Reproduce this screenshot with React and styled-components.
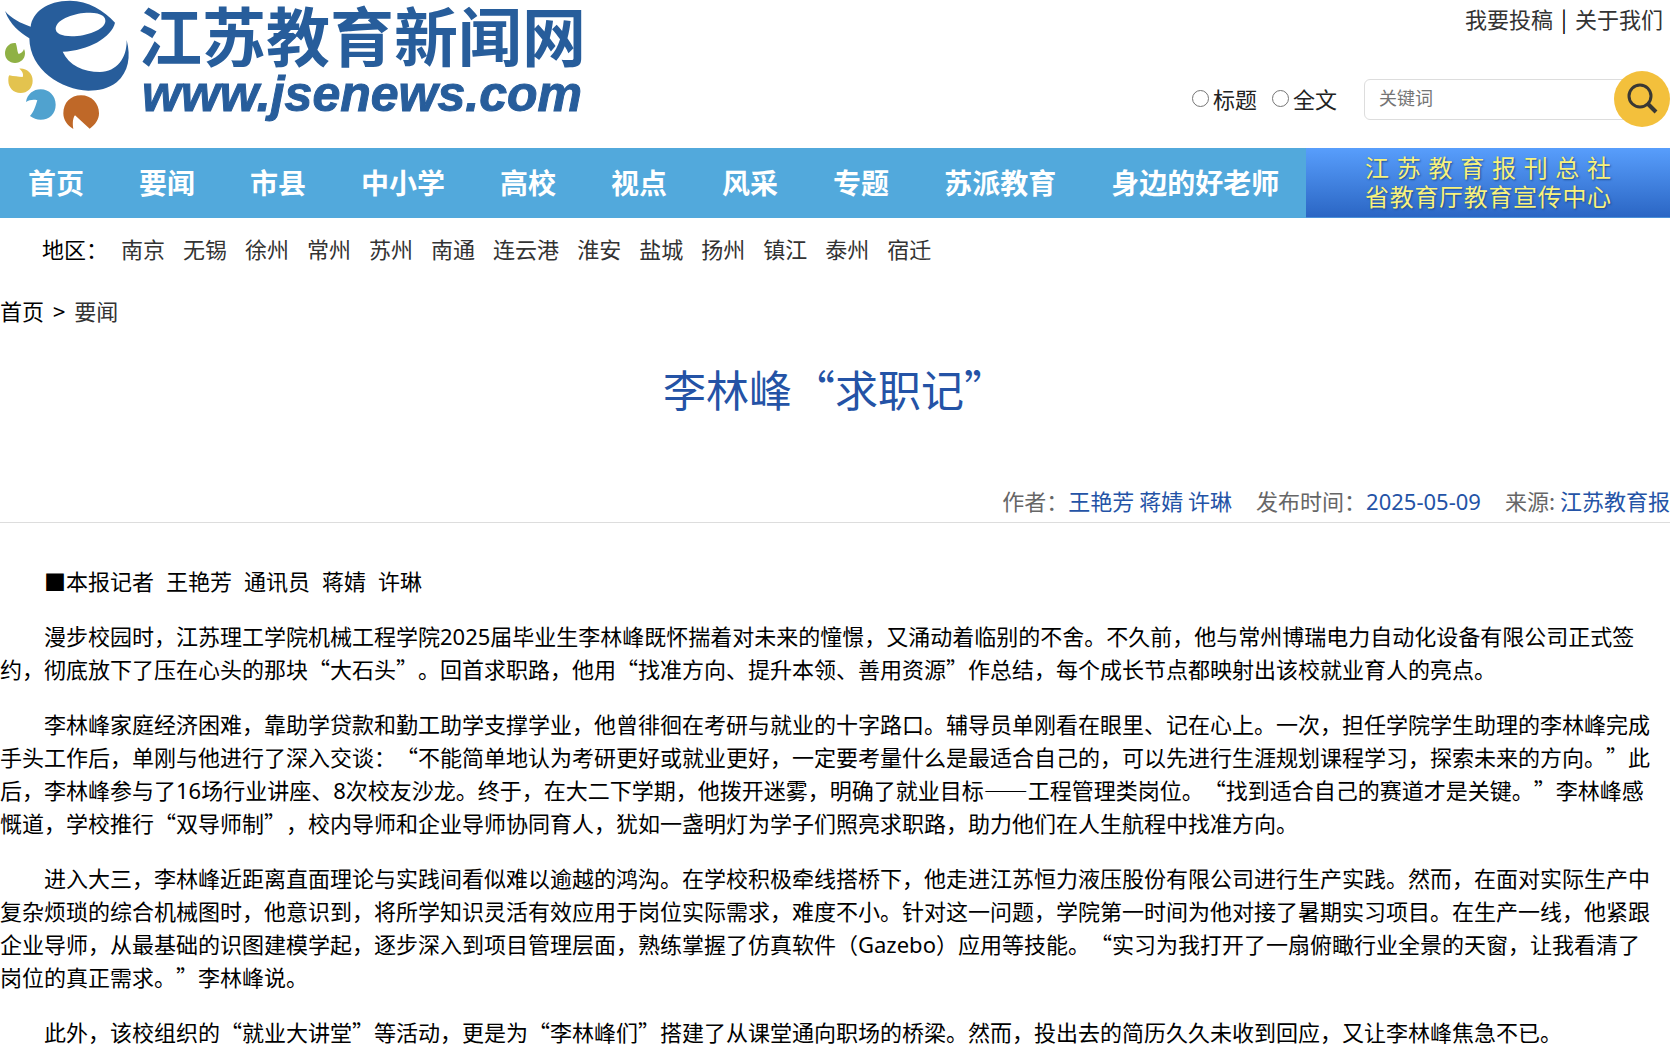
import React, { useState } from "react";
import styled, { createGlobalStyle } from "styled-components";

const GlobalStyle = createGlobalStyle`
  * {
    box-sizing: border-box;
  }
  body {
    margin: 0;
    background: #fff;
    color: #000;
    font-family: "Noto Sans CJK SC", "Noto Sans", sans-serif;
    font-size: 22px;
    line-height: 33px;
    text-spacing-trim: space-all;
  }
  a {
    color: #333;
    text-decoration: none;
  }
`;

const Page = styled.div`
  margin-right: 8px;
`;

const Header = styled.header`
  display: flex;
  justify-content: space-between;
  height: 148px;
`;

const Brand = styled.a`
  display: flex;
  gap: 6px;
  color: #275d9b;
`;

const BrandText = styled.div`
  display: flex;
  flex-direction: column;
  gap: 6px;
`;

const BrandName = styled.span`
  font-size: 64px;
  font-weight: 700;
  line-height: 66px;
`;

const BrandUrl = styled.span`
  padding-left: 4px;
  font-family: "Liberation Sans", Arial, sans-serif;
  font-size: 50px;
  font-weight: 700;
  font-style: italic;
  line-height: 44px;
  -webkit-text-stroke: 1px #275d9b;
`;

const Tools = styled.div`
  display: flex;
  flex-direction: column;
  align-items: flex-end;
  gap: 36px;
  padding-top: 2px;
`;

const TopLinks = styled.div`
  display: flex;
  gap: 8px;
  padding-right: 7px;
`;

const Search = styled.form`
  display: flex;
  align-items: center;
`;

const RadioLabel = styled.label`
  display: flex;
  align-items: center;
  gap: 4px;
  margin-right: 15px;
  padding-bottom: 2px;
  color: #222;
`;

const Radio = styled.input`
  width: 17px;
  height: 17px;
  margin: 0;
`;

const Keyword = styled.input`
  width: 276px;
  height: 41px;
  margin-left: 12px;
  padding: 0 40px 4px 14px;
  border: 1px solid #ddd;
  border-radius: 6px;
  outline: none;
  font-family: inherit;
  font-size: 18px;
  &::placeholder {
    color: #757575;
  }
`;

const SearchButton = styled.button`
  width: 56px;
  height: 56px;
  margin-left: -26px;
  padding: 0;
  border: none;
  border-radius: 50%;
  background: #f3c03c;
  z-index: 1;
  cursor: pointer;
`;

const Nav = styled.nav`
  display: flex;
  height: 70px;
  background: #52a9dc;
`;

const NavLink = styled.a`
  padding: 0 27px 0 28px;
  color: #fff;
  font-size: 28px;
  font-weight: 700;
  line-height: 68px;
  white-space: nowrap;
`;

const Banner = styled.a`
  display: flex;
  flex: 1;
  flex-direction: column;
  align-items: center;
  justify-content: center;
  padding-bottom: 4px;
  background: linear-gradient(#589efc, #2b66c4);
  border-bottom: 1px solid #4a90d9;
`;

const BannerLine = styled.span`
  width: 246px;
  color: #f8f27c;
  font-size: 24px;
  line-height: 29px;
  text-align-last: justify;
  text-shadow: 1px 1px 2px #1c4a8f;
  white-space: nowrap;
`;

const Regions = styled.div`
  display: flex;
  gap: 18px;
  padding: 14px 0 0 42px;
`;

const RegionTitle = styled.span`
  margin-right: -5px;
`;

const Crumbs = styled.div`
  display: flex;
  gap: 9px;
  padding-top: 29px;
`;

const CrumbHome = styled.a`
  color: #000;
`;

const Title = styled.h1`
  margin: 31px 0 0;
  color: #2453a6;
  font-size: 43px;
  font-weight: 400;
  line-height: 60px;
  text-align: center;
`;

const Meta = styled.div`
  display: flex;
  justify-content: flex-end;
  gap: 24px;
  margin-top: 66px;
  padding-bottom: 5px;
  border-bottom: 1px solid #ddd;
  color: #666;
`;

const MetaValue = styled.span`
  color: #2453a6;
`;

const Latin = styled.span`
  font-family: "Noto Sans", sans-serif;
  line-height: 1;
`;

const Article = styled.article`
  padding: 41px 18px 0 0;
`;

const Byline = styled.p`
  display: flex;
  gap: 12px;
  margin: 0;
  padding-left: 44px;
`;

const Paragraph = styled.p`
  margin: 22px 0 0;
  text-indent: 44px;
`;

const navItems = [
  "首页",
  "要闻",
  "市县",
  "中小学",
  "高校",
  "视点",
  "风采",
  "专题",
  "苏派教育",
  "身边的好老师",
];

const regions = [
  "南京",
  "无锡",
  "徐州",
  "常州",
  "苏州",
  "南通",
  "连云港",
  "淮安",
  "盐城",
  "扬州",
  "镇江",
  "泰州",
  "宿迁",
];

const Logo = () => (
  <svg width="132" height="132" viewBox="0 0 396 396" aria-hidden="true">
    <path
      fill="#275d9b"
      fillRule="evenodd"
      d="M15 33C33 55 62 70 92 80C97 38 140 2 210 2C265 2 312 32 345 68C335 112 265 152 188 155C207 196 250 216 300 216C350 215 381 175 380 120C393 170 386 215 350 247C325 267 295 272 265 272C185 270 89 210 88 115C60 97 30 75 15 33ZM167 85C170 55 230 37 270 38C305 39 318 50 316 65C312 90 260 108 215 109C185 109 166 101 167 85Z"
    />
    <path
      fill="#8fb145"
      d="M47 129C27 127 15 143 15 160C15 177 28 189 45 189C62 189 75 177 75 160C75 155 74 151 72 147C70 155 63 160 56 162C51 155 52 140 47 129Z"
    />
    <path
      fill="#e3c34f"
      d="M58 206C80 204 98 220 98 242C98 264 82 279 62 279C40 279 25 262 25 242C25 235 25 230 28 226C42 229 55 230 68 231C72 222 66 212 58 206Z"
    />
    <path
      fill="#50a2cf"
      d="M78 306C82 282 100 268 122 268C148 268 167 288 167 314C167 342 148 359 122 359C110 359 100 355 90 348C102 335 106 320 112 301C100 298 88 300 78 306Z"
    />
    <path
      fill="#bf6828"
      d="M220 387C202 377 190 360 190 340C190 308 212 286 243 286C275 286 297 310 297 340C297 358 287 373 269 386L225 346C217 356 218 374 220 387Z"
    />
  </svg>
);

const SearchIcon = () => (
  <svg width="56" height="56" viewBox="0 0 56 56" fill="none" stroke="#393834">
    <circle cx="26" cy="25" r="11" strokeWidth="3" />
    <path d="M33 32L42 41" strokeWidth="4" />
  </svg>
);

export default function App() {
  const [scope, setScope] = useState("");
  const [keyword, setKeyword] = useState("");

  return (
    <>
      <GlobalStyle />
      <Page lang="zh-CN">
        <Header>
          <Brand href="#">
            <Logo />
            <BrandText>
              <BrandName>江苏教育新闻网</BrandName>
              <BrandUrl>www.jsenews.com</BrandUrl>
            </BrandText>
          </Brand>
          <Tools>
            <TopLinks>
              <a href="#">我要投稿</a>
              <span>|</span>
              <a href="#">关于我们</a>
            </TopLinks>
            <Search onSubmit={(e) => e.preventDefault()}>
              <RadioLabel>
                <Radio
                  type="radio"
                  name="scope"
                  checked={scope === "title"}
                  onChange={() => setScope("title")}
                />
                标题
              </RadioLabel>
              <RadioLabel>
                <Radio
                  type="radio"
                  name="scope"
                  checked={scope === "full"}
                  onChange={() => setScope("full")}
                />
                全文
              </RadioLabel>
              <Keyword
                type="text"
                placeholder="关键词"
                aria-label="关键词"
                value={keyword}
                onChange={(e) => setKeyword(e.target.value)}
              />
              <SearchButton type="submit" aria-label="搜索">
                <SearchIcon />
              </SearchButton>
            </Search>
          </Tools>
        </Header>

        <Nav>
          {navItems.map((item) => (
            <NavLink href="#" key={item}>
              {item}
            </NavLink>
          ))}
          <Banner href="#">
            <BannerLine>江苏教育报刊总社</BannerLine>
            <BannerLine>省教育厅教育宣传中心</BannerLine>
          </Banner>
        </Nav>

        <Regions>
          <RegionTitle>地区：</RegionTitle>
          {regions.map((region) => (
            <a href="#" key={region}>
              {region}
            </a>
          ))}
        </Regions>

        <Crumbs>
          <CrumbHome href="#">首页</CrumbHome>
          <span>&gt;</span>
          <a href="#">要闻</a>
        </Crumbs>

        <Title>李林峰“求职记”</Title>

        <Meta>
          <span>
            作者：<MetaValue>王艳芳 蒋婧 许琳</MetaValue>
          </span>
          <span>
            发布时间：
            <MetaValue>
              <Latin>2025-05-09</Latin>
            </MetaValue>
          </span>
          <span>
            来源: <MetaValue>江苏教育报</MetaValue>
          </span>
        </Meta>

        <Article>
          <Byline>
            <span>■本报记者</span>
            <span>王艳芳</span>
            <span>通讯员</span>
            <span>蒋婧</span>
            <span>许琳</span>
          </Byline>
          <Paragraph>
            漫步校园时，江苏理工学院机械工程学院<Latin>2025</Latin>
            届毕业生李林峰既怀揣着对未来的憧憬，又涌动着临别的不舍。不久前，他与常州博瑞电力自动化设备有限公司正式签约，彻底放下了压在心头的那块“大石头”。回首求职路，他用“找准方向、提升本领、善用资源”作总结，每个成长节点都映射出该校就业育人的亮点。
          </Paragraph>
          <Paragraph>
            李林峰家庭经济困难，靠助学贷款和勤工助学支撑学业，他曾徘徊在考研与就业的十字路口。辅导员单刚看在眼里、记在心上。一次，担任学院学生助理的李林峰完成手头工作后，单刚与他进行了深入交谈：“不能简单地认为考研更好或就业更好，一定要考量什么是最适合自己的，可以先进行生涯规划课程学习，探索未来的方向。”此后，李林峰参与了
            <Latin>16</Latin>场行业讲座、<Latin>8</Latin>
            次校友沙龙。终于，在大二下学期，他拨开迷雾，明确了就业目标——工程管理类岗位。“找到适合自己的赛道才是关键。”李林峰感慨道，学校推行“双导师制”，校内导师和企业导师协同育人，犹如一盏明灯为学子们照亮求职路，助力他们在人生航程中找准方向。
          </Paragraph>
          <Paragraph>
            进入大三，李林峰近距离直面理论与实践间看似难以逾越的鸿沟。在学校积极牵线搭桥下，他走进江苏恒力液压股份有限公司进行生产实践。然而，在面对实际生产中复杂烦琐的综合机械图时，他意识到，将所学知识灵活有效应用于岗位实际需求，难度不小。针对这一问题，学院第一时间为他对接了暑期实习项目。在生产一线，他紧跟企业导师，从最基础的识图建模学起，逐步深入到项目管理层面，熟练掌握了仿真软件（
            <Latin>Gazebo</Latin>
            ）应用等技能。“实习为我打开了一扇俯瞰行业全景的天窗，让我看清了岗位的真正需求。”李林峰说。
          </Paragraph>
          <Paragraph>
            此外，该校组织的“就业大讲堂”等活动，更是为“李林峰们”搭建了从课堂通向职场的桥梁。然而，投出去的简历久久未收到回应，又让李林峰焦急不已。
          </Paragraph>
        </Article>
      </Page>
    </>
  );
}
